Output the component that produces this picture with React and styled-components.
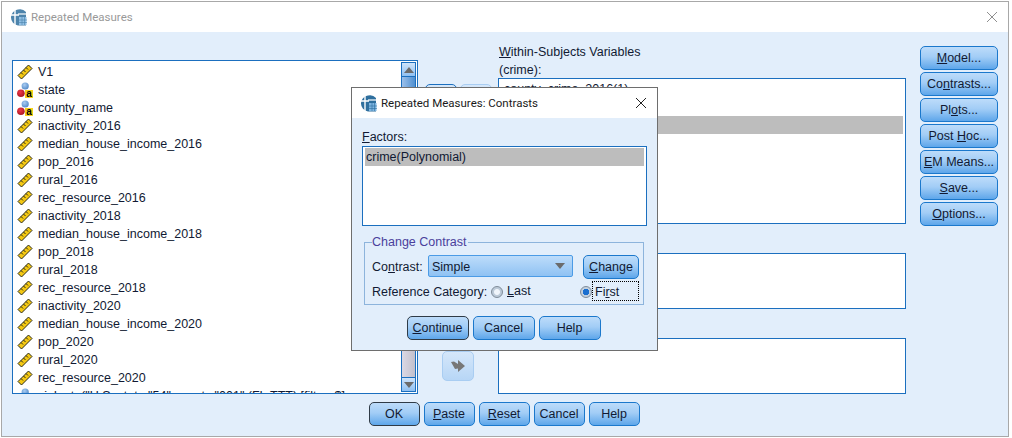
import React from "react";
import styled, { createGlobalStyle } from "styled-components";

const GlobalStyle = createGlobalStyle`
  html, body {
    margin: 0;
    background: #ffffff;
  }
  body {
    font-family: "Liberation Sans", Arial, sans-serif;
    font-size: 12px;
    color: #111a33;
  }
  u {
    text-underline-offset: 1px;
  }
`;

const panelBg = "#e2eefb";
const blueLine = "#1b6fbf";
const selected = "#bdbdbd";

const Page = styled.div`
  width: 1012px;
  height: 438px;
  overflow: hidden;
  position: relative;
`;

const Window = styled.div`
  width: 1008px;
  height: 436px;
  margin: 1px 0 0 1px;
  box-sizing: border-box;
  border: 1px solid #a8a8a8;
  display: flex;
  flex-direction: column;
`;

const TitleBar = styled.div`
  height: 30px;
  flex: none;
  background: #ffffff;
  display: flex;
  align-items: center;
  gap: 4px;
  padding: 0 10px 0 8px;
  font-family: Roboto, "Liberation Sans", sans-serif;
  font-size: 11.5px;
  color: ${(p) => (p.$active ? "#1a1a1a" : "#999999")};
`;

const TitleText = styled.span`
  flex: 1;
`;

const Body = styled.div`
  flex: 1;
  background: ${panelBg};
  padding: 11px 0 0 10px;
  display: flex;
  flex-direction: column;
`;

const MainRow = styled.div`
  display: flex;
  align-items: flex-start;
  height: 351px;
`;

const VarList = styled.div`
  width: 406px;
  height: 334px;
  margin-top: 17px;
  box-sizing: border-box;
  border: 1px solid ${blueLine};
  background: #ffffff;
  display: flex;
  flex: none;
`;

const VarRows = styled.div`
  flex: 1;
  min-width: 0;
  overflow: hidden;
  padding: 2px 0 0 4px;
`;

const VarRow = styled.div`
  height: 18px;
  display: flex;
  align-items: center;
  gap: 5px;
  white-space: nowrap;
  font-size: 12.5px;
`;

const ScrollBar = styled.div`
  width: 15px;
  flex: none;
  margin: 1px 1px 1px 0;
  display: flex;
  flex-direction: column;
`;

const ScrollEnd = styled.div`
  height: 15px;
  flex: none;
  box-sizing: border-box;
  border: 1px solid ${blueLine};
  background: linear-gradient(#cfe4fa, #8fc0f2);
  display: flex;
  align-items: center;
  justify-content: center;
`;

const ScrollThumb = styled.div`
  height: 110px;
  box-sizing: border-box;
  border: solid ${blueLine};
  border-width: 0 1px;
  background: linear-gradient(90deg, #9cc0ea, #4f8fd0);
`;

const ScrollTrack = styled.div`
  flex: 1;
  box-sizing: border-box;
  border: solid ${blueLine};
  border-width: 0 1px;
  background: linear-gradient(90deg, #dad8e4, #c2c0cc);
`;

const MoveColumn = styled.div`
  width: 80px;
  flex: none;
  margin-top: 41px;
  display: flex;
  flex-direction: column;
  align-items: center;
`;

const MovePair = styled.div`
  display: flex;
  gap: 3px;
`;

const MoveButton = styled.div`
  width: 32px;
  height: 30px;
  box-sizing: border-box;
  border-radius: 5px;
  border: 1px solid ${(p) => (p.$faded ? "#a9cdf2" : blueLine)};
  background: linear-gradient(#d5e7fa, #b7d6f6);
  display: flex;
  align-items: center;
  justify-content: center;
  margin-top: ${(p) => p.$top || 0}px;
`;

const TargetColumn = styled.div`
  width: 408px;
  flex: none;
  display: flex;
  flex-direction: column;
`;

const TargetLabel = styled.div`
  height: ${(p) => p.$height}px;
  line-height: 18px;
  font-size: 12.5px;
  padding-left: 1px;
  box-sizing: border-box;
`;

const TargetBox = styled.div`
  height: ${(p) => p.$height}px;
  box-sizing: border-box;
  border: 1px solid ${blueLine};
  background: #ffffff;
  padding: 1px 2px 0 1px;
  overflow: hidden;
`;

const TargetRow = styled.div`
  height: 18px;
  line-height: 19px;
  padding-left: ${(p) => p.$inset}px;
  font-size: 12.5px;
  background: ${(p) => (p.$selected ? selected : "transparent")};
`;

const SideButtons = styled.div`
  margin: 3px 0 0 14px;
  display: flex;
  flex-direction: column;
  gap: 2px;
`;

const Button = styled.div`
  width: ${(p) => p.$width}px;
  height: 24px;
  box-sizing: border-box;
  border-radius: 5px;
  border: 1px solid ${(p) => (p.$default ? "#2f3b47" : "#1b78cc")};
  background: linear-gradient(#bddcfa 0%, #a2cdf6 45%, #5ea6ea 100%);
  padding-top: 1px;
  line-height: 21px;
  text-align: center;
  font-size: 12.5px;
  white-space: nowrap;
  flex: none;
`;

const Footer = styled.div`
  display: flex;
  justify-content: center;
  gap: 4px;
  padding: 8px 12px 0 0;
`;

const Modal = styled.div`
  position: absolute;
  left: 351px;
  top: 87px;
  width: 307px;
  height: 264px;
  box-sizing: border-box;
  border: 1px solid #6e6e6e;
  display: flex;
  flex-direction: column;
`;

const ModalBody = styled.div`
  flex: 1;
  background: ${panelBg};
  padding: 11px 10px 0 10px;
  display: flex;
  flex-direction: column;
`;

const FactorsLabel = styled.div`
  height: 17px;
  line-height: 17px;
  font-size: 12.5px;
`;

const FactorsBox = styled.div`
  height: 80px;
  box-sizing: border-box;
  border: 1px solid ${blueLine};
  background: #ffffff;
  padding: 1px 2px;
`;

const ContrastGroup = styled.fieldset`
  margin: 9px 3px 0 2px;
  padding: 0 2px 0 7px;
  height: 70px;
  box-sizing: border-box;
  border: 1px solid #8db4dc;
  min-width: 0;
  display: block;
`;

const GroupLegend = styled.legend`
  padding: 0 1px 0 0;
  font-size: 12.5px;
  line-height: 14px;
  color: #4a3f9c;
`;

const ContrastRow = styled.div`
  display: flex;
  align-items: center;
  height: 24px;
  margin-top: 6px;
`;

const FieldLabel = styled.span`
  width: 56px;
  flex: none;
  font-size: 12.5px;
`;

const SelectBox = styled.div`
  width: 145px;
  height: 22px;
  box-sizing: border-box;
  border: 1px solid #4b9be6;
  border-radius: 2px;
  background: linear-gradient(#bddcfa, #8fc2f3);
  display: flex;
  align-items: center;
  justify-content: space-between;
  padding: 2px 7px 0 3px;
  font-size: 12.5px;
  margin: 0 10px 2px 0;

  & svg {
    margin-bottom: 3px;
  }
`;

const ReferenceRow = styled.div`
  display: flex;
  align-items: center;
  height: 20px;
  margin-top: 2px;
  font-size: 12.5px;
`;

const ReferenceLabel = styled.span`
  width: 119px;
  flex: none;
  margin-top: 2px;
`;

const RadioDot = styled.span`
  width: 12px;
  height: 12px;
  flex: none;
  box-sizing: border-box;
  border-radius: 50%;
  border: 1px solid #7f8c99;
  margin-top: 2px;
  background: ${(p) =>
    p.$checked
      ? "radial-gradient(circle, #1b6fcf 0 3px, #c3d0de 3.5px)"
      : "radial-gradient(circle, #f0f5fb 0 2.5px, #bccad8 3.5px)"};
`;

const RadioLast = styled.span`
  display: flex;
  align-items: center;
  gap: 4px;
  width: 89px;
  flex: none;
`;

const FocusLabel = styled.span`
  width: 47px;
  height: 20px;
  box-sizing: border-box;
  border: 1px dotted #000000;
  padding-left: 2px;
  line-height: 20px;
`;

const ModalButtons = styled.div`
  margin-top: 11px;
  display: flex;
  justify-content: center;
  gap: 4px;
  padding-right: 2px;
`;

const RulerIcon = () => (
  <svg width="16" height="16" viewBox="0 0 16 16">
    <path d="M1 11.5 11.5 1 15 4.5 4.5 15Z" fill="#f4c812" stroke="#2a2a1a" strokeWidth="1" />
    <path d="M4 8.5l2 2M6.5 6l2 2M9 3.5l2 2" stroke="#2a2a1a" strokeWidth="1" />
  </svg>
);

const NominalIcon = () => (
  <svg width="16" height="16" viewBox="0 0 16 16">
    <defs>
      <radialGradient id="ballBlue" cx="0.4" cy="0.35" r="0.7">
        <stop offset="0" stopColor="#a9cdf2" />
        <stop offset="1" stopColor="#4f86c6" />
      </radialGradient>
      <radialGradient id="ballRed" cx="0.4" cy="0.35" r="0.7">
        <stop offset="0" stopColor="#ef3a48" />
        <stop offset="1" stopColor="#a81420" />
      </radialGradient>
    </defs>
    <circle cx="8.2" cy="4" r="3.6" fill="url(#ballBlue)" />
    <circle cx="3.9" cy="11.3" r="3.8" fill="url(#ballRed)" />
    <rect x="8" y="8" width="8" height="8" fill="#f7d21a" />
    <text x="12" y="15" textAnchor="middle" fontSize="10" fontWeight="700" fontFamily="Liberation Sans" fill="#000000">
      a
    </text>
  </svg>
);

const AppIcon = ({ faded }) => (
  <svg width="17" height="17" viewBox="0 0 17 17" opacity={faded ? 0.85 : 1}>
    <path d="M8 0.5A8 8 0 0 0 1 8.5 8 8 0 0 0 8 16.5H16V3A8 8 0 0 0 8 0.5Z" fill="#2e6f9e" />
    <path d="M5 1v15M1 6h8" stroke="#ffffff" strokeWidth="1.4" />
    <path d="M8 5h9" stroke="#ffffff" strokeWidth="1.2" />
    <rect x="9" y="8" width="7.5" height="8" fill="#7db4e0" />
    <path d="M9 11h8M9 13.5h8M12 8v8M14.5 8v8" stroke="#2e6f9e" strokeWidth="0.6" />
  </svg>
);

const CloseIcon = ({ color }) => (
  <svg width="12" height="12" viewBox="0 0 12 12">
    <path d="M1 1l10 10M11 1L1 11" stroke={color} strokeWidth="1" fill="none" />
  </svg>
);

const Triangle = ({ up }) => (
  <svg width="10" height="6" viewBox="0 0 10 6">
    <path d={up ? "M5 0 10 6H0Z" : "M0 0H10L5 6Z"} fill="#6b6b6b" />
  </svg>
);

const MoveArrow = () => (
  <svg width="14" height="12" viewBox="0 0 14 12">
    <path d="M0 2 3 1.5 7 4V0L14 6 7 12V8.5L4 9Z" fill="#777777" />
  </svg>
);

const variables = [
  ["scale", "V1"],
  ["nominal", "state"],
  ["nominal", "county_name"],
  ["scale", "inactivity_2016"],
  ["scale", "median_house_income_2016"],
  ["scale", "pop_2016"],
  ["scale", "rural_2016"],
  ["scale", "rec_resource_2016"],
  ["scale", "inactivity_2018"],
  ["scale", "median_house_income_2018"],
  ["scale", "pop_2018"],
  ["scale", "rural_2018"],
  ["scale", "rec_resource_2018"],
  ["scale", "inactivity_2020"],
  ["scale", "median_house_income_2020"],
  ["scale", "pop_2020"],
  ["scale", "rural_2020"],
  ["scale", "rec_resource_2020"],
  ["nominal", 'violent_("U.S. state "54" county "001" (FL.TTT) [filter_$]'],
];

const sideButtons = [
  <><u>M</u>odel...</>,
  <>Co<u>n</u>trasts...</>,
  <>Pl<u>o</u>ts...</>,
  <>Post <u>H</u>oc...</>,
  <><u>E</u>M Means...</>,
  <><u>S</u>ave...</>,
  <><u>O</u>ptions...</>,
];

function App() {
  return (
    <Page>
      <GlobalStyle />
      <Window>
        <TitleBar>
          <AppIcon faded />
          <TitleText>Repeated Measures</TitleText>
          <CloseIcon color="#8f8f8f" />
        </TitleBar>
        <Body>
          <MainRow>
            <VarList>
              <VarRows>
                {variables.map(([kind, name]) => (
                  <VarRow key={name}>
                    {kind === "scale" ? <RulerIcon /> : <NominalIcon />}
                    {name}
                  </VarRow>
                ))}
              </VarRows>
              <ScrollBar>
                <ScrollEnd>
                  <Triangle up />
                </ScrollEnd>
                <ScrollThumb />
                <ScrollTrack />
                <ScrollEnd>
                  <Triangle />
                </ScrollEnd>
              </ScrollBar>
            </VarList>
            <MoveColumn>
              <MovePair>
                <MoveButton />
                <MoveButton $faded />
              </MovePair>
              <MoveButton $faded $top={237}>
                <MoveArrow />
              </MoveButton>
            </MoveColumn>
            <TargetColumn>
              <TargetLabel $height={35}>
                <u>W</u>ithin-Subjects Variables
                <br />
                (crime):
              </TargetLabel>
              <TargetBox $height={146}>
                <TargetRow $inset={4}>county_crime_2016(1)</TargetRow>
                <TargetRow $inset={4}>county_crime_2018(2)</TargetRow>
                <TargetRow $inset={4} $selected>county_crime_2020(3)</TargetRow>
              </TargetBox>
              <TargetLabel $height={29} />
              <TargetBox $height={56} />
              <TargetLabel $height={29} />
              <TargetBox $height={56} />
            </TargetColumn>
            <SideButtons>
              {sideButtons.map((label, i) => (
                <Button key={i} $width={78}>
                  {label}
                </Button>
              ))}
            </SideButtons>
          </MainRow>
          <Footer>
            <Button $width={51} $default>OK</Button>
            <Button $width={51}><u>P</u>aste</Button>
            <Button $width={51}><u>R</u>eset</Button>
            <Button $width={51}>Cancel</Button>
            <Button $width={51}>Help</Button>
          </Footer>
        </Body>
      </Window>
      <Modal>
        <TitleBar $active>
          <AppIcon />
          <TitleText>Repeated Measures: Contrasts</TitleText>
          <CloseIcon color="#222222" />
        </TitleBar>
        <ModalBody>
          <FactorsLabel><u>F</u>actors:</FactorsLabel>
          <FactorsBox>
            <TargetRow $inset={1} $selected>crime(Polynomial)</TargetRow>
          </FactorsBox>
          <ContrastGroup>
            <GroupLegend>Change Contrast</GroupLegend>
            <ContrastRow>
              <FieldLabel>Co<u>n</u>trast:</FieldLabel>
              <SelectBox>
                Simple
                <Triangle />
              </SelectBox>
              <Button $width={56}><u>C</u>hange</Button>
            </ContrastRow>
            <ReferenceRow>
              <ReferenceLabel>Reference Category:</ReferenceLabel>
              <RadioLast>
                <RadioDot />
                <span><u>L</u>ast</span>
              </RadioLast>
              <RadioDot $checked />
              <FocusLabel>Fi<u>r</u>st</FocusLabel>
            </ReferenceRow>
          </ContrastGroup>
          <ModalButtons>
            <Button $width={62} $default><u>C</u>ontinue</Button>
            <Button $width={62}>Cancel</Button>
            <Button $width={62}>Help</Button>
          </ModalButtons>
        </ModalBody>
      </Modal>
    </Page>
  );
}

export default App;
